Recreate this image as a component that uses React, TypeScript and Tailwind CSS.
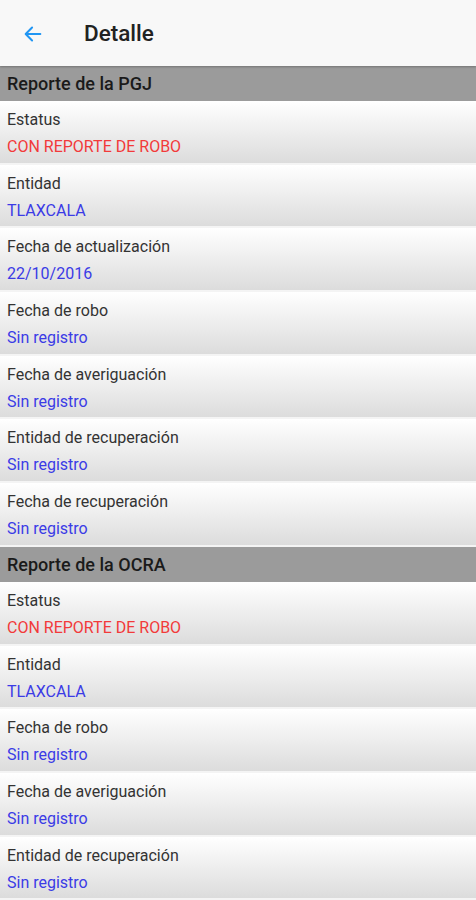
import React from "react";

type Row = { label: string; value: string; alert?: boolean };

const pgj: Row[] = [
  { label: "Estatus", value: "CON REPORTE DE ROBO", alert: true },
  { label: "Entidad", value: "TLAXCALA" },
  { label: "Fecha de actualización", value: "22/10/2016" },
  { label: "Fecha de robo", value: "Sin registro" },
  { label: "Fecha de averiguación", value: "Sin registro" },
  { label: "Entidad de recuperación", value: "Sin registro" },
  { label: "Fecha de recuperación", value: "Sin registro" },
];

const ocra: Row[] = [
  { label: "Estatus", value: "CON REPORTE DE ROBO", alert: true },
  { label: "Entidad", value: "TLAXCALA" },
  { label: "Fecha de robo", value: "Sin registro" },
  { label: "Fecha de averiguación", value: "Sin registro" },
  { label: "Entidad de recuperación", value: "Sin registro" },
];

const SectionHeader = ({ title }: { title: string }) => (
  <div className="h-[35px] shrink-0 bg-[#9b9b9b] flex items-center px-[7px] text-[18px] font-medium text-[#1a1a1a]">
    {title}
  </div>
);

const DetailRow = ({ row }: { row: Row }) => (
  <div className="h-[63.7px] shrink-0 border-b-[2px] border-[#f4f4f4] bg-gradient-to-b from-white to-[#dcdcdc] px-[7px] pt-[8px]">
    <div className="text-[16px] leading-[21px] text-[#333]">{row.label}</div>
    <div
      className={
        "mt-[6px] text-[16px] leading-[21px] " +
        (row.alert ? "text-[#f23a3a]" : "text-[#3b3be6]")
      }
    >
      {row.value}
    </div>
  </div>
);

export default function App() {
  return (
    <div className="w-[476px] h-[900px] overflow-hidden bg-white font-['Roboto',sans-serif] flex flex-col">
      {/* HEADER */}
      <div className="h-[66px] shrink-0 bg-[#f8f8f8] flex items-center pt-[2px] shadow-[0_1px_2px_rgba(0,0,0,0.25)] z-10">
        <svg className="ml-[22px]" width="22" height="22" viewBox="0 0 24 24" fill="none">
          <path d="M20 12H5M11 5l-7 7 7 7" stroke="#2196f3" strokeWidth="2.2" strokeLinecap="round" strokeLinejoin="round" />
        </svg>
        <span className="ml-[40px] text-[22.5px] font-medium text-[#222]">Detalle</span>
      </div>
      {/* PGJ */}
      <SectionHeader title="Reporte de la PGJ" />
      {pgj.map((r, i) => (
        <DetailRow key={"p" + i} row={r} />
      ))}
      {/* OCRA */}
      <SectionHeader title="Reporte de la OCRA" />
      {ocra.map((r, i) => (
        <DetailRow key={"o" + i} row={r} />
      ))}
      <div className="flex-1 min-h-[3px] bg-[#222]" />
    </div>
  );
}
